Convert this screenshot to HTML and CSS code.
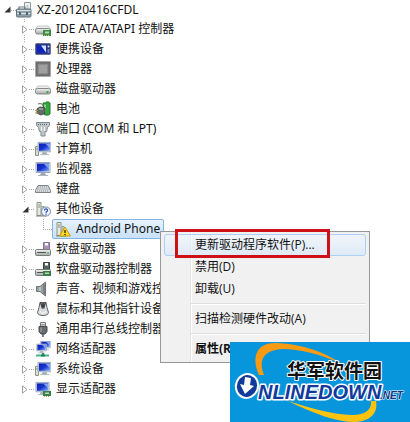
FILE: index.html
```html
<!DOCTYPE html>
<html lang="zh-CN">
<head>
    <meta charset="UTF-8">
    <meta name="viewport" content="width=device-width, initial-scale=1.0">
    <title>设备管理器</title>
    <link rel="stylesheet" href="styles.css">
</head>
<body>
    <svg class="defs" width="0" height="0" aria-hidden="true">
        <defs>
            <linearGradient id="screen" x1="0" y1="0" x2="1" y2="1">
                <stop offset="0" stop-color="#0a1fb0"/>
                <stop offset=".5" stop-color="#1733cf"/>
                <stop offset="1" stop-color="#8fb4f5"/>
            </linearGradient>
            <linearGradient id="metal" x1="0" y1="0" x2="0" y2="1">
                <stop offset="0" stop-color="#f4f5f4"/>
                <stop offset="1" stop-color="#a3a7a5"/>
            </linearGradient>
            <symbol id="tower" viewBox="0 0 16 16">
                <path d="M2 1.5h4v13H2z" fill="#e6e9e0" stroke="#8c9484"/>
                <path d="M7 5.5h2v9H7z" fill="#d6dacf" stroke="#99a091"/>
                <path d="M3 4h2M3 6h2" stroke="#8c9484"/>
                <path d="M1 15h10" stroke="#7c8474"/>
            </symbol>
            <symbol id="monitor" viewBox="0 0 16 16">
                <path d="M1 1.5h14v10H1z" fill="#dfe6ef" stroke="#9aa7b8"/>
                <path d="M2 2.500h12v8H2z" fill="url(#screen)"/>
                <path d="M9 3h5v5z" fill="#7ea2f0"/>
                <path d="M6 12h4l1 2H5z" fill="#9ba8b2"/>
                <path d="M3 14.500h10" stroke="#aab5bd"/>
            </symbol>
            <symbol id="drive" viewBox="0 0 16 16">
                <path d="M3 5h10l2.500 3H.5z" fill="#eff1ef" stroke="#b5b9b6" stroke-width=".8"/>
                <rect x=".5" y="7.500" width="15" height="5.500" rx="2" fill="url(#metal)" stroke="#858a87"/>
            </symbol>
        </defs>
    </svg>

    <main class="device-manager">
        <div class="row root">
            <button type="button" class="toggle" aria-label="折叠" aria-expanded="true"><svg width="7" height="7" viewBox="0 0 7 7"><path d="M6.500 .5v6h-6z" fill="#333"/></svg></button>
            <svg class="icon" viewBox="0 0 16 16">
                <path d="M8.500.5h6v10h-6z" fill="#eef2f3" stroke="#8f999e"/>
                <path d="M10.500 3h2v5h-2z" fill="#c3cdd2"/>
                <path d="M3 7V5h6v2" fill="none" stroke="#6d7e88" stroke-width="1.200"/>
                <rect x=".5" y="7" width="14.500" height="8" rx="1" fill="#8fa1aa" stroke="#62737c"/>
                <path d="M1 8.500h13.500M1 11.500h13.500" stroke="#dbe4e7"/>
                <path d="M3 10h2v3H3zM10 10h2v3h-2z" fill="#53636c"/>
            </svg>
            <span class="label">XZ-20120416CFDL</span>
        </div>
        <ul class="tree">
            <li class="row">
                <button type="button" class="toggle" aria-label="展开"><svg width="6" height="9" viewBox="0 0 6 9"><path d="M.5.8v7.400l4.500-3.700z" fill="#fff" stroke="#a0a0a0"/></svg></button>
                <svg class="icon" viewBox="0 0 16 16"><use href="#drive"/><path d="M8 9h8v6H8z" fill="#398a48"/><path d="M10 10.500h4v2h-4z" fill="#b8d9b0"/><path d="M9 14.500h6" stroke="#d5c967" stroke-dasharray="1 1"/></svg>
                <span class="label">IDE ATA/ATAPI 控制器</span>
            </li>
            <li class="row">
                <button type="button" class="toggle" aria-label="展开"><svg width="6" height="9" viewBox="0 0 6 9"><path d="M.5.8v7.400l4.500-3.700z" fill="#fff" stroke="#a0a0a0"/></svg></button>
                <svg class="icon" viewBox="0 0 16 16"><rect x=".5" y="2.500" width="15" height="11" rx="1" fill="#27358c" stroke="#68728f"/><path d="M2 4.500h9v7H2z" fill="#0d24bd"/><path d="M6 4.500h5v7z" fill="#d8e5ff"/><circle cx="13.500" cy="5.500" r="1" fill="#e5edf5"/><path d="M12.500 9h2M12.500 11h2" stroke="#c1cce0"/></svg>
                <span class="label">便携设备</span>
            </li>
            <li class="row">
                <button type="button" class="toggle" aria-label="展开"><svg width="6" height="9" viewBox="0 0 6 9"><path d="M.5.8v7.400l4.500-3.700z" fill="#fff" stroke="#a0a0a0"/></svg></button>
                <svg class="icon" viewBox="0 0 16 16"><path d="M.5.5h15v15H.5z" fill="#777" stroke="#999" stroke-dasharray="1 1"/><path d="M2 2h12v12H2z" fill="#8c8c8c" stroke="#626262"/><path d="M4 4h8v8H4z" fill="#a0a0a0"/></svg>
                <span class="label">处理器</span>
            </li>
            <li class="row">
                <button type="button" class="toggle" aria-label="展开"><svg width="6" height="9" viewBox="0 0 6 9"><path d="M.5.8v7.400l4.500-3.700z" fill="#fff" stroke="#a0a0a0"/></svg></button>
                <svg class="icon" viewBox="0 0 16 16"><use href="#drive"/><path d="M11.500 10h2v2h-2z" fill="#43a447"/></svg>
                <span class="label">磁盘驱动器</span>
            </li>
            <li class="row">
                <button type="button" class="toggle" aria-label="展开"><svg width="6" height="9" viewBox="0 0 6 9"><path d="M.5.8v7.400l4.500-3.700z" fill="#fff" stroke="#a0a0a0"/></svg></button>
                <svg class="icon" viewBox="0 0 16 16"><path d="M8 2h3V1h3v1h1v11c-1 1.500-5 1.500-6.500 0z" fill="#35a53d" stroke="#23792d"/><path d="M10 3.500v8" stroke="#a5e59c" stroke-width="1.500"/><path d="M3 3c3-1 5 0 6 4" fill="none" stroke="#4a6250"/><path d="M2 8l3-2 5 1v5l-4 2-4-2z" fill="#626c68" stroke="#414a46"/><path d="M0 9.500h3M0 12h3" stroke="#b29645"/><path d="M4 8h4" stroke="#c4ccc7"/></svg>
                <span class="label">电池</span>
            </li>
            <li class="row">
                <button type="button" class="toggle" aria-label="展开"><svg width="6" height="9" viewBox="0 0 6 9"><path d="M.5.8v7.400l4.500-3.700z" fill="#fff" stroke="#a0a0a0"/></svg></button>
                <svg class="icon" viewBox="0 0 16 16"><path d="M1.500 1.500h13v3l-2 2-1 4H10V15H6v-4.500H4.500l-1-4-2-2z" fill="#c1c8cb" stroke="#7f898e"/><path d="M3 3.500h10" stroke="#566168" stroke-dasharray="1 1"/><path d="M6.500 6v4M9.500 6v4" stroke="#f4f7f8"/></svg>
                <span class="label">端口 (COM 和 LPT)</span>
            </li>
            <li class="row">
                <button type="button" class="toggle" aria-label="展开"><svg width="6" height="9" viewBox="0 0 6 9"><path d="M.5.8v7.400l4.500-3.700z" fill="#fff" stroke="#a0a0a0"/></svg></button>
                <svg class="icon" viewBox="0 0 16 16"><path d="M.5 5.500h3v9h-3z" fill="#dce1d5" stroke="#8a9679"/><path d="M1 8h2" stroke="#69a052"/><use href="#monitor" x="2" y="0" width="15" height="15"/></svg>
                <span class="label">计算机</span>
            </li>
            <li class="row">
                <button type="button" class="toggle" aria-label="展开"><svg width="6" height="9" viewBox="0 0 6 9"><path d="M.5.8v7.400l4.500-3.700z" fill="#fff" stroke="#a0a0a0"/></svg></button>
                <svg class="icon" viewBox="0 0 16 16"><use href="#monitor"/></svg>
                <span class="label">监视器</span>
            </li>
            <li class="row">
                <button type="button" class="toggle" aria-label="展开"><svg width="6" height="9" viewBox="0 0 6 9"><path d="M.5.8v7.400l4.500-3.700z" fill="#fff" stroke="#a0a0a0"/></svg></button>
                <svg class="icon" viewBox="0 0 16 16"><path d="M3 4.500h10l2.500 5v2H.5v-2z" fill="#d8dadb" stroke="#7d8286" stroke-linejoin="round"/><path d="M3 6h10M2.500 8h11M2 10h12" stroke="#8e9397" stroke-dasharray="1 1"/></svg>
                <span class="label">键盘</span>
            </li>
            <li>
                <div class="row">
                    <button type="button" class="toggle" aria-label="折叠" aria-expanded="true"><svg width="7" height="7" viewBox="0 0 7 7"><path d="M6.500 .5v6h-6z" fill="#333"/></svg></button>
                    <svg class="icon" viewBox="0 0 16 16"><use href="#tower"/><circle cx="11" cy="10.500" r="4.500" fill="#f1f5fc" stroke="#7288b0"/><path d="M9.500 9.500c0-2.500 3.300-2 3 0-.2 1-1.500 1-1.500 2.300M11 12.500v1.200" fill="none" stroke="#2247b5" stroke-width="1.200"/></svg>
                    <span class="label">其他设备</span>
                </div>
                <ul class="subtree">
                    <li class="row selected">
                        <svg class="icon" viewBox="0 0 16 16"><use href="#tower"/><path d="M10 6l5.500 9h-11z" fill="#ffdb25" stroke="#c79a12" stroke-linejoin="round"/><path d="M10 9v3M10 13v1.200" stroke="#332800" stroke-width="1.300"/></svg>
                        <span class="label">Android Phone</span>
                    </li>
                </ul>
            </li>
            <li class="row">
                <button type="button" class="toggle" aria-label="展开"><svg width="6" height="9" viewBox="0 0 6 9"><path d="M.5.8v7.400l4.500-3.700z" fill="#fff" stroke="#a0a0a0"/></svg></button>
                <svg class="icon" viewBox="0 0 16 16"><path d="M8.500 1.500h6v7h-6z" fill="#a894b4" stroke="#86719a"/><path d="M10 2h3v2.500h-3z" fill="#fff"/><rect x=".5" y="8.500" width="15" height="6" rx="1" fill="url(#metal)" stroke="#777d79"/><path d="M2 11.500h9" stroke="#4f5552"/><path d="M12 12h2" stroke="#43a447"/></svg>
                <span class="label">软盘驱动器</span>
            </li>
            <li class="row">
                <button type="button" class="toggle" aria-label="展开"><svg width="6" height="9" viewBox="0 0 6 9"><path d="M.5.8v7.400l4.500-3.700z" fill="#fff" stroke="#a0a0a0"/></svg></button>
                <svg class="icon" viewBox="0 0 16 16"><path d="M8.500 1.500h6v7h-6z" fill="#55635d" stroke="#35453d"/><path d="M10 2h3v2.500h-3z" fill="#fff"/><rect x=".5" y="8.500" width="15" height="6" rx="1" fill="url(#metal)" stroke="#777d79"/><path d="M2 11.500h7" stroke="#4f5552"/><path d="M8 10h8v5H8z" fill="#39804a"/><path d="M10 11.500h4v1.500h-4z" fill="#bed9bd"/></svg>
                <span class="label">软盘驱动器控制器</span>
            </li>
            <li class="row">
                <button type="button" class="toggle" aria-label="展开"><svg width="6" height="9" viewBox="0 0 6 9"><path d="M.5.8v7.400l4.500-3.700z" fill="#fff" stroke="#a0a0a0"/></svg></button>
                <svg class="icon" viewBox="0 0 16 16"><path d="M1.500 5.500H5L10.500 1v14L5 10.500H1.500z" fill="#9aa0a3" stroke="#6c7275"/><path d="M5 6v4" stroke="#dfe3e4"/><path d="M9 3v10" stroke="#61676a"/></svg>
                <span class="label">声音、视频和游戏控制器</span>
            </li>
            <li class="row">
                <button type="button" class="toggle" aria-label="展开"><svg width="6" height="9" viewBox="0 0 6 9"><path d="M.5.8v7.400l4.500-3.700z" fill="#fff" stroke="#a0a0a0"/></svg></button>
                <svg class="icon" viewBox="0 0 16 16"><path d="M5 1.500h6l1 5 1.500 5c0 4-11 4-11 0L4 6.500z" fill="#d9dbdc" stroke="#606467"/><path d="M5.500 1l2 6.500M10.500 1l-2 6.500" stroke="#44484b" stroke-width="1.500"/><path d="M8 2v4" stroke="#222" stroke-width="1.500"/><path d="M5 10c1 3 5 3 6 0" fill="none" stroke="#fff"/></svg>
                <span class="label">鼠标和其他指针设备</span>
            </li>
            <li class="row">
                <button type="button" class="toggle" aria-label="展开"><svg width="6" height="9" viewBox="0 0 6 9"><path d="M.5.8v7.400l4.500-3.700z" fill="#fff" stroke="#a0a0a0"/></svg></button>
                <svg class="icon" viewBox="0 0 16 16"><path d="M5.500 1.500h5v4h-5z" fill="#e2e2e2" stroke="#777"/><path d="M7 3v1.500M9 3v1.500" stroke="#555"/><path d="M4 5.500h8v5L10 13H6l-2-2.500z" fill="#696d70" stroke="#484b4d"/><path d="M6 6.500V11" stroke="#a8acae"/><path d="M8 13v3" stroke="#555" stroke-width="1.500"/></svg>
                <span class="label">通用串行总线控制器</span>
            </li>
            <li class="row">
                <button type="button" class="toggle" aria-label="展开"><svg width="6" height="9" viewBox="0 0 6 9"><path d="M.5.8v7.400l4.500-3.700z" fill="#fff" stroke="#a0a0a0"/></svg></button>
                <svg class="icon" viewBox="0 0 16 16"><use href="#monitor" x="5" y="-1" width="11" height="11"/><use href="#monitor" x="1" y="2" width="11" height="11"/><path d="M8 12v2" stroke="#318f62" stroke-width="2"/><path d="M1 14.500h13" stroke="#44b586" stroke-width="2"/><path d="M6 14.500h4" stroke="#237b54" stroke-width="2"/></svg>
                <span class="label">网络适配器</span>
            </li>
            <li class="row">
                <button type="button" class="toggle" aria-label="展开"><svg width="6" height="9" viewBox="0 0 6 9"><path d="M.5.8v7.400l4.500-3.700z" fill="#fff" stroke="#a0a0a0"/></svg></button>
                <svg class="icon" viewBox="0 0 16 16"><path d="M.5 5.500h3v9h-3z" fill="#dce1d5" stroke="#8a9679"/><path d="M1 8h2" stroke="#69a052"/><use href="#monitor" x="2" y="0" width="15" height="15"/></svg>
                <span class="label">系统设备</span>
            </li>
            <li class="row">
                <button type="button" class="toggle" aria-label="展开"><svg width="6" height="9" viewBox="0 0 6 9"><path d="M.5.8v7.400l4.500-3.700z" fill="#fff" stroke="#a0a0a0"/></svg></button>
                <svg class="icon" viewBox="0 0 16 16"><use href="#monitor" x="0" y="0" width="15" height="15"/><path d="M8 10h8v5H8z" fill="#39804a"/><path d="M10 11.500h4v1.500h-4z" fill="#bed9bd"/><path d="M9 15.500h6" stroke="#b6a84c" stroke-dasharray="1 1"/></svg>
                <span class="label">显示适配器</span>
            </li>
        </ul>
    </main>

    <div class="context-menu" role="menu">
        <button type="button" class="menu-item active" role="menuitem">更新驱动程序软件(P)...</button>
        <button type="button" class="menu-item" role="menuitem">禁用(D)</button>
        <button type="button" class="menu-item" role="menuitem">卸载(U)</button>
        <hr class="separator">
        <button type="button" class="menu-item" role="menuitem">扫描检测硬件改动(A)</button>
        <hr class="separator">
        <button type="button" class="menu-item default" role="menuitem">属性(R)</button>
        <div class="marker"></div>
    </div>

    <div class="watermark">
        <svg width="180" height="80" viewBox="0 0 180 80">
            <path d="M29 33C20 12 29 0 47 1c27 1 49 10 65 21C91 12 68 7 53 7 34 8 28 17 34 33z" fill="#f99b12"/>
            <path d="M58 59c27 13 48 21 67 21 17-1 23-10 21-21h-5c1 8-5 14-19 14-22-1-42-7-64-14z" fill="#ffc20e"/>
            <text class="brand-cn" x="57" y="36">华军软件园</text>
            <text class="brand-en" x="28" y="57">NLINEDOWN</text>
            <text class="brand-net" x="150" y="57">.NET</text>
            <ellipse cx="17" cy="44" rx="11" ry="12" transform="rotate(20 17 44)" fill="#123a9c" stroke="#fff" stroke-width="2"/>
            <path d="M15 35l6 1-1 7 4 1-9 8-5-10 4 1z" fill="#fff"/>
        </svg>
    </div>
</body>
</html>
```
FILE: styles.css
```css
body { margin: 0; background: #fff; color: #111; font: 12px/20px "Open Sans", "Noto Sans CJK SC", sans-serif; }
.defs { position: absolute; }
ul { list-style: none; margin: 0; padding: 0; }
button { font: inherit; color: inherit; border: none; background: none; padding: 0; text-align: left; }

/* device tree */
.device-manager { overflow: hidden; font-family: "Noto Sans", "Noto Sans CJK SC", sans-serif; }
.row { display: flex; align-items: center; height: 20px; white-space: nowrap; }
.root { height: 19px; padding-left: 3px; }
.toggle { display: flex; align-items: center; justify-content: center; width: 8px; height: 12px; background: #fff; }
.toggle svg { display: block; }
.icon { width: 16px; height: 16px; margin-right: 5px; flex: none; }
.row .toggle + .icon { padding-left: 5px; background: repeating-linear-gradient(90deg, #aaa 0 1px, transparent 1px 2px) 0 8px / 5px 1px no-repeat; }
.tree { padding-left: 21px; background: repeating-linear-gradient(#aaa 0 1px, transparent 1px 2px) 24px 0 / 1px calc(100% - 10px) no-repeat; }
.tree .row .toggle + .icon { padding-left: 6px; }
.subtree {
    padding-left: 31px;
    background:
        repeating-linear-gradient(#aaa 0 1px, transparent 1px 2px) 22px 0 / 1px 10px no-repeat,
        repeating-linear-gradient(90deg, #aaa 0 1px, transparent 1px 2px) 22px 10px / 9px 1px no-repeat;
}
.selected { width: max-content; box-sizing: border-box; padding: 0 3px 0 2px; border: 1px solid #84b5e2; border-radius: 2px; background: linear-gradient(#e6f2fd, #c9e1fa); }

/* context menu */
.context-menu {
    position: absolute; left: 160px; top: 231px; width: 210px; box-sizing: border-box; padding: 2px 3px;
    border: 1px solid #979797; background: linear-gradient(90deg, #e2e3e3 0 1px, #fff 1px 2px) 29px 0 / 2px 100% no-repeat #f1f1f1;
}
.menu-item { display: block; width: 100%; height: 22px; box-sizing: border-box; padding-left: 30px; border: 1px solid transparent; border-radius: 3px; white-space: nowrap; }
.menu-item.active { border-color: #aecff7; background: linear-gradient(rgba(240, 246, 253, .7), rgba(215, 232, 250, .7)); }
.menu-item.default { font-weight: bold; }
.separator { height: 1px; margin: 3px 0 3px 27px; border: none; border-top: 1px solid #dedede; background: #fff; }
.marker { position: absolute; left: 14px; top: -3px; width: 155px; height: 29px; box-sizing: border-box; border: 3px solid #cf1016; pointer-events: none; }

/* site badge */
.watermark { position: fixed; right: 0; bottom: 0; background: #0796dc; }
.watermark svg { display: block; }
.watermark text { paint-order: stroke; stroke: #fff; stroke-linejoin: round; }
.brand-cn { font: bold 19px "Noto Sans CJK SC", sans-serif; fill: #111; stroke-width: 2px; }
.brand-en { font: italic bold 20px "Liberation Sans", sans-serif; fill: #123a9c; stroke-width: 3px; }
.brand-net { font: italic bold 10px "Liberation Sans", sans-serif; fill: #14357c; stroke-width: 1px; }
```
